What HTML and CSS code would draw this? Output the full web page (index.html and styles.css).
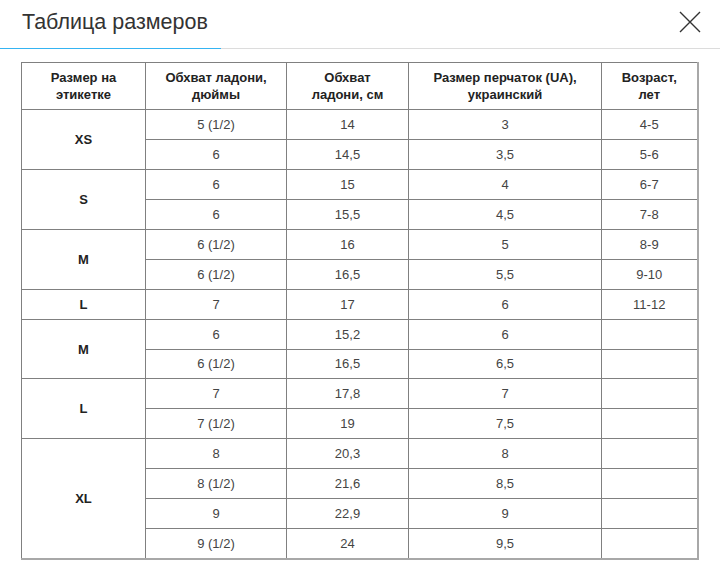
FILE: index.html
```html
<!DOCTYPE html>
<html lang="ru">
<head>
<meta charset="utf-8">
<title>Таблица размеров</title>
<link rel="stylesheet" href="styles.css">
</head>
<body>
<div class="modal">
  <div class="modal-head">
    <h1 class="modal-title">Таблица размеров</h1>
    <button class="close" aria-label="Закрыть">
      <svg width="22" height="22" viewBox="0 0 22 22"><path d="M1 1 L21 21 M21 1 L1 21" stroke="#333" stroke-width="1.4" fill="none"/></svg>
    </button>
  </div>
  <div class="tabs-line"><span class="tab-active"></span></div>
  <div class="modal-body">
    <table class="sizes">
      <colgroup>
        <col class="c1"><col class="c2"><col class="c3"><col class="c4"><col class="c5">
      </colgroup>
      <thead>
        <tr>
          <th>Размер на<br>этикетке</th>
          <th>Обхват ладони,<br>дюймы</th>
          <th>Обхват<br>ладони, см</th>
          <th>Размер перчаток (UA),<br>украинский</th>
          <th>Возраст,<br>лет</th>
        </tr>
      </thead>
      <tbody>
        <tr><td rowspan="2" class="label">XS</td><td>5 (1/2)</td><td>14</td><td>3</td><td>4-5</td></tr>
        <tr><td>6</td><td>14,5</td><td>3,5</td><td>5-6</td></tr>
        <tr><td rowspan="2" class="label">S</td><td>6</td><td>15</td><td>4</td><td>6-7</td></tr>
        <tr><td>6</td><td>15,5</td><td>4,5</td><td>7-8</td></tr>
        <tr><td rowspan="2" class="label">M</td><td>6 (1/2)</td><td>16</td><td>5</td><td>8-9</td></tr>
        <tr><td>6 (1/2)</td><td>16,5</td><td>5,5</td><td>9-10</td></tr>
        <tr><td class="label">L</td><td>7</td><td>17</td><td>6</td><td>11-12</td></tr>
        <tr><td rowspan="2" class="label">M</td><td>6</td><td>15,2</td><td>6</td><td></td></tr>
        <tr><td>6 (1/2)</td><td>16,5</td><td>6,5</td><td></td></tr>
        <tr><td rowspan="2" class="label">L</td><td>7</td><td>17,8</td><td>7</td><td></td></tr>
        <tr><td>7 (1/2)</td><td>19</td><td>7,5</td><td></td></tr>
        <tr><td rowspan="4" class="label">XL</td><td>8</td><td>20,3</td><td>8</td><td></td></tr>
        <tr><td>8 (1/2)</td><td>21,6</td><td>8,5</td><td></td></tr>
        <tr><td>9</td><td>22,9</td><td>9</td><td></td></tr>
        <tr><td>9 (1/2)</td><td>24</td><td>9,5</td><td></td></tr>
      </tbody>
    </table>
  </div>
</div>
</body>
</html>
```

FILE: styles.css
```css
html, body {
  margin: 0;
  padding: 0;
  background: #fff;
}

body {
  font-family: "Liberation Sans", Arial, sans-serif;
  color: #333;
}

.modal {
  width: 720px;
}

.modal-head {
  display: flex;
  align-items: flex-start;
  justify-content: space-between;
  height: 48px;
}

.modal-title {
  margin: 0;
  padding: 9px 0 0 22px;
  font-size: 21.5px;
  font-weight: normal;
  line-height: 26px;
  color: #333;
}

.close {
  border: 0;
  background: none;
  padding: 0;
  margin: 11px 19px 0 0;
  width: 22px;
  height: 22px;
  cursor: pointer;
}

.close svg {
  display: block;
}

.tabs-line {
  height: 1px;
  background: #dcdcdc;
  display: flex;
}

.tab-active {
  width: 221px;
  height: 1px;
  background: #35b4f2;
}

.modal-body {
  padding: 13px 0 0 21px;
}

.sizes {
  border-collapse: collapse;
  width: 676px;
  table-layout: fixed;
  font-size: 13px;
  border-right: 2px solid #a8a8a8;
  border-bottom: 2px solid #a8a8a8;
}

.c1 { width: 124px; }
.c2 { width: 141px; }
.c3 { width: 122px; }
.c4 { width: 193px; }
.c5 { width: 96px; }

.sizes th,
.sizes td {
  border: 1px solid #808080;
  text-align: center;
  vertical-align: middle;
  padding: 0 4px;
}

.sizes th {
  height: 46px;
  font-weight: bold;
  line-height: 17px;
  color: #222;
}

.sizes td {
  height: 28.95px;
  color: #444;
  line-height: 15px;
}

.sizes td.label {
  font-weight: bold;
  color: #222;
}
```
